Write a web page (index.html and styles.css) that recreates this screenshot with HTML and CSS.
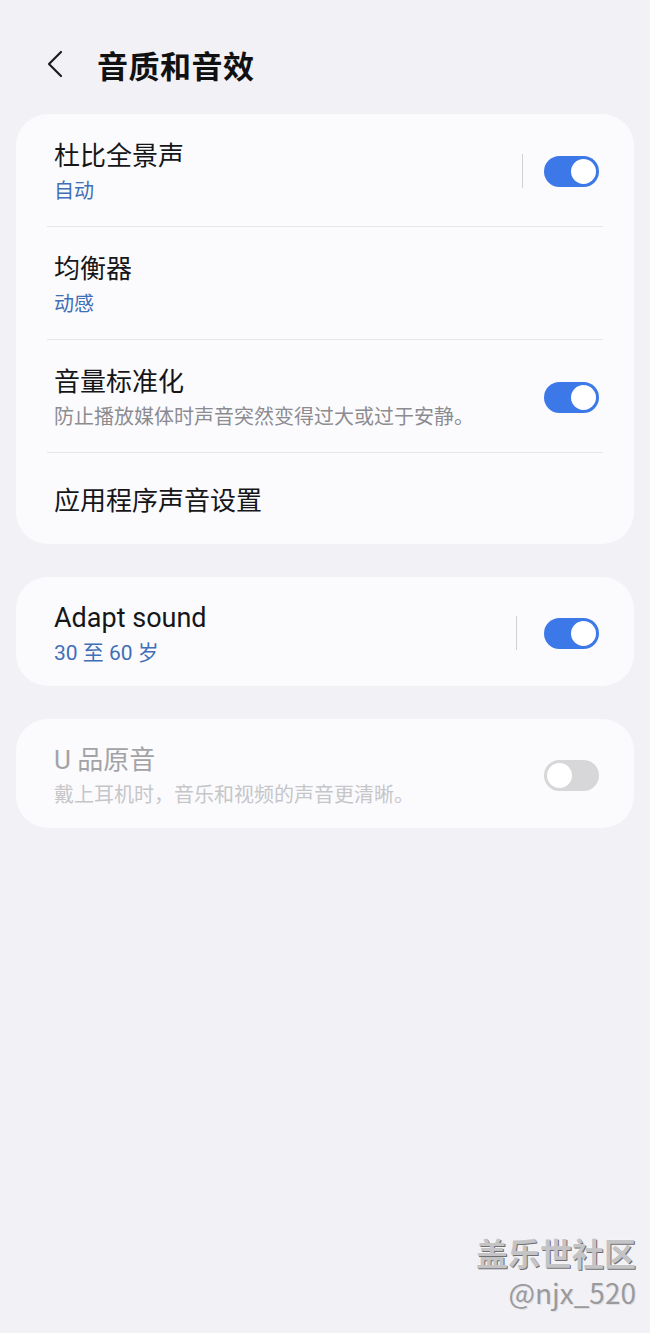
FILE: index.html
```html
<!DOCTYPE html>
<html lang="zh-CN">
    <head>
        <meta charset="UTF-8">
        <meta name="viewport" content="width=device-width, initial-scale=1.0">
        <title>音质和音效</title>

        <!-- styling untuk halaman -->
        <link rel="stylesheet" href="styles.css">
    </head>
    <body>
        <div class="page">

            <!-- header -->
            <header class="topbar">
                <svg class="back" width="18" height="28" viewBox="0 0 18 28">
                    <polyline points="15,2 3,14 15,26" fill="none" stroke="#1c1c1e" stroke-width="2.2" stroke-linecap="round" stroke-linejoin="round"/>
                </svg>
                <h1>音质和音效</h1>
            </header>

            <!-- kartu pertama -->
            <section class="card">
                <div class="row">
                    <div class="texts">
                        <div class="title">杜比全景声</div>
                        <div class="sub blue">自动</div>
                    </div>
                    <span class="vline"></span>
                    <span class="toggle on"><span class="knob"></span></span>
                </div>
                <div class="sep"></div>
                <div class="row">
                    <div class="texts">
                        <div class="title">均衡器</div>
                        <div class="sub blue">动感</div>
                    </div>
                </div>
                <div class="sep"></div>
                <div class="row">
                    <div class="texts">
                        <div class="title">音量标准化</div>
                        <div class="sub">防止播放媒体时声音突然变得过大或过于安静。</div>
                    </div>
                    <span class="toggle on"><span class="knob"></span></span>
                </div>
                <div class="sep"></div>
                <div class="row single">
                    <div class="texts">
                        <div class="title">应用程序声音设置</div>
                    </div>
                </div>
            </section>

            <!-- kartu kedua -->
            <section class="card">
                <div class="row solo">
                    <div class="texts">
                        <div class="title latin">Adapt sound</div>
                        <div class="sub blue latin">30 至 60 岁</div>
                    </div>
                    <span class="vline wide"></span>
                    <span class="toggle on"><span class="knob"></span></span>
                </div>
            </section>

            <!-- kartu ketiga (nonaktif) -->
            <section class="card">
                <div class="row solo disabled">
                    <div class="texts">
                        <div class="title">U 品原音</div>
                        <div class="sub">戴上耳机时，音乐和视频的声音更清晰。</div>
                    </div>
                    <span class="toggle"><span class="knob"></span></span>
                </div>
            </section>

            <!-- watermark -->
            <div class="watermark">
                <div class="wm-name">盖乐世社区</div>
                <div class="wm-user">@njx_520</div>
            </div>
        </div>
    </body>
</html>
```

FILE: styles.css
```css
body {
    margin: 0;
    padding: 0;
    background-color: #f1f1f6;
    font-family: Roboto, "Noto Sans CJK SC", sans-serif;
    color: #161618;
}

.page {
    position: relative;
    min-height: 1333px;
    padding: 34px 16px 0;
    box-sizing: border-box;
}

.topbar {
    display: flex;
    align-items: center;
    height: 60px;
    margin: 0 0 20px;
    padding-left: 30px;
}

.back {
    display: block;
    margin-right: 33px;
}

.topbar h1 {
    margin: 0;
    font-family: "Noto Sans CJK SC", sans-serif;
    font-size: 31px;
    font-weight: 700;
    color: #111;
    letter-spacing: 0.5px;
}

.card {
    background-color: #fbfbfe;
    border-radius: 32px;
    margin-bottom: 33px;
}

.row {
    display: flex;
    align-items: center;
    padding: 25px 35px 19px 38px;
}

.row.single {
    padding: 31px 35px 26px 38px;
}

.row.solo {
    padding: 24px 35px 17px 38px;
}

.texts {
    flex: 1;
}

.title {
    font-size: 26px;
    line-height: 34px;
}

.title.latin {
    font-size: 27px;
}

.sub {
    font-size: 20px;
    line-height: 32px;
    margin-top: 2px;
    color: #8c8c90;
}

.sub.latin {
    font-size: 21px;
}

.sub.blue {
    color: #3f6fb6;
}

.disabled .title {
    color: #a3a3a6;
}

.disabled .sub {
    color: #c6c6c9;
}

.sep {
    height: 1px;
    background-color: #e6e6ea;
    margin: 0 31px;
}

.vline {
    width: 1px;
    height: 34px;
    background-color: #cfcfd4;
    margin: 0 21px 4px 0;
}

.vline.wide {
    margin-right: 27px;
}

.toggle {
    display: flex;
    align-items: center;
    justify-content: flex-start;
    width: 55px;
    height: 31px;
    padding: 0 3px;
    margin-bottom: 4px;
    box-sizing: border-box;
    border-radius: 16px;
    background-color: #d7d7da;
}

.toggle .knob {
    width: 25px;
    height: 25px;
    border-radius: 50%;
    background-color: #fff;
}

.toggle.on {
    justify-content: flex-end;
    background-color: #3c78e8;
}

.watermark {
    position: absolute;
    right: 14px;
    top: 1234px;
    text-align: right;
    font-family: "Noto Sans CJK SC", sans-serif;
    color: #c4c4c6;
}

.wm-name {
    font-size: 32px;
    font-weight: 700;
    line-height: 36px;
    text-shadow: 1px 1px 0 #6f6f72, -1px -1px 0 #f4f4f4;
}

.wm-user {
    font-size: 28px;
    line-height: 32px;
    margin-top: 6px;
    color: #9a9a9d;
    text-shadow: 1px 1px 0 #e0e0e2;
}
```
